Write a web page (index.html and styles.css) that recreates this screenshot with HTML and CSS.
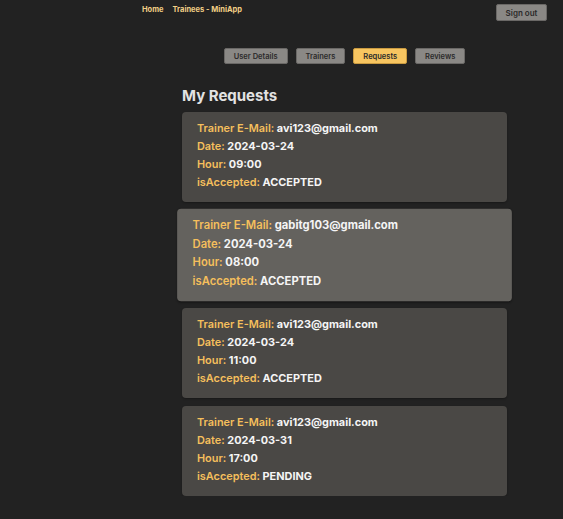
FILE: index.html
```html
<!DOCTYPE html>
<html>
<head>
<meta charset="utf-8">
<link rel="stylesheet" href="styles.css">
</head>
<body>
<header class="topbar">
  <nav class="links">
    <a class="link">Home</a>
    <a class="link">Trainees - MiniApp</a>
  </nav>
  <button class="signout">Sign out</button>
</header>
<main class="main">
  <div class="tabs">
    <button class="tab">User Details</button>
    <button class="tab">Trainers</button>
    <button class="tab active">Requests</button>
    <button class="tab">Reviews</button>
  </div>
  <h1 class="title">My Requests</h1>
  <div class="list">
    <div class="card">
      <div class="row"><span class="label">Trainer E-Mail:</span> avi123@gmail.com</div>
      <div class="row"><span class="label">Date:</span> 2024-03-24</div>
      <div class="row"><span class="label">Hour:</span> 09:00</div>
      <div class="row"><span class="label">isAccepted:</span> ACCEPTED</div>
    </div>
    <div class="card hover">
      <div class="row"><span class="label">Trainer E-Mail:</span> gabitg103@gmail.com</div>
      <div class="row"><span class="label">Date:</span> 2024-03-24</div>
      <div class="row"><span class="label">Hour:</span> 08:00</div>
      <div class="row"><span class="label">isAccepted:</span> ACCEPTED</div>
    </div>
    <div class="card">
      <div class="row"><span class="label">Trainer E-Mail:</span> avi123@gmail.com</div>
      <div class="row"><span class="label">Date:</span> 2024-03-24</div>
      <div class="row"><span class="label">Hour:</span> 11:00</div>
      <div class="row"><span class="label">isAccepted:</span> ACCEPTED</div>
    </div>
    <div class="card">
      <div class="row"><span class="label">Trainer E-Mail:</span> avi123@gmail.com</div>
      <div class="row"><span class="label">Date:</span> 2024-03-31</div>
      <div class="row"><span class="label">Hour:</span> 17:00</div>
      <div class="row"><span class="label">isAccepted:</span> PENDING</div>
    </div>
  </div>
</main>
</body>
</html>
```
FILE: styles.css
```css
html, body {
  margin: 0;
  padding: 0;
  background: #222222;
  font-family: Inter, "Noto Sans", sans-serif;
}
.topbar {
  display: flex;
  justify-content: space-between;
  align-items: flex-start;
  padding: 4px 16px 0 142px;
  height: 24px;
  box-sizing: border-box;
}
.links {
  display: flex;
  gap: 9px;
  padding-top: 1px;
}
.link {
  color: #f2cf86;
  font-size: 7.5px;
  font-weight: 700;
  line-height: 10px;
}
.signout {
  width: 51px;
  height: 17px;
  background: #8a8885;
  border: 1px solid #6a6866;
  border-radius: 2px;
  color: #2a2a2a;
  font-family: Inter, sans-serif;
  font-size: 8px;
  font-weight: 600;
  padding: 0;
}
.main {
  margin-left: 182px;
  width: 325px;
}
.tabs {
  display: flex;
  justify-content: center;
  gap: 8px;
  margin-top: 24px;
}
.tab {
  height: 16px;
  padding: 0 9px;
  background: #8a8885;
  border: 1px solid #6a6866;
  border-radius: 2px;
  color: #2a2a2a;
  font-family: Inter, sans-serif;
  font-size: 7.5px;
  font-weight: 600;
}
.tab.active {
  background: #f7c560;
  border-color: #c99a40;
}
.title {
  margin: 23px 0 7px 0;
  color: #e2e2e2;
  font-size: 15px;
  font-weight: 700;
  line-height: 18px;
}
.list {
  display: flex;
  flex-direction: column;
  gap: 8px;
}
.card {
  background: #4a4845;
  border-radius: 4px;
  padding: 7px 15px 11px 15px;
  height: 90px;
  box-sizing: border-box;
  box-shadow: 0 1px 2px rgba(0,0,0,0.3);
}
.card.hover {
  background: #64625e;
  transform: scale(1.03);
}
.row {
  color: #f5f5f5;
  font-size: 10.9px;
  font-weight: 700;
  line-height: 18px;
}
.label {
  color: #f5bf5c;
  font-weight: 600;
}
```
